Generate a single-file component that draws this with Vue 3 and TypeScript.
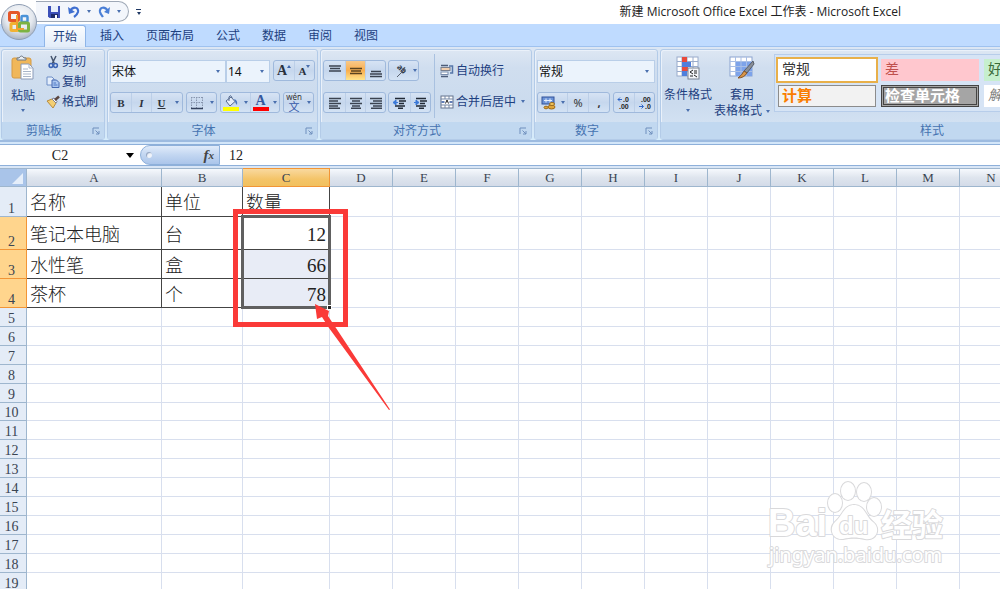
<script setup lang="ts">
import { ref } from 'vue'

interface Column { name: string; width: number }
interface Row { id: number; height: number; cells: string[] }

const tabs: string[] = ['开始', '插入', '页面布局', '公式', '数据', '审阅', '视图']
const activeTab = ref('开始')

const fontName = ref('宋体')
const fontSize = ref('14')
const numberFormat = ref('常规')
const cellRef = ref('C2')
const formula = ref('12')

const columns: Column[] = [
  { name: 'A', width: 135 },
  { name: 'B', width: 81 },
  { name: 'C', width: 87 },
  ...'DEFGHIJKLMN'.split('').map((name) => ({ name, width: 63 })),
]
const tableWidth = columns.reduce((sum, c) => sum + c.width, 27)

const data: string[][] = [
  ['名称', '单位', '数量'],
  ['笔记本电脑', '台', '12'],
  ['水性笔', '盒', '66'],
  ['茶杯', '个', '78'],
]
const dataHeights: number[] = [30, 33, 29, 29]

const rows: Row[] = Array.from({ length: 20 }, (_, i) => ({
  id: i + 1,
  height: dataHeights[i] ?? (i === 9 ? 18 : 19),
  cells: data[i] ?? [],
}))

function cellClass(row: Row, col: number): Record<string, boolean> {
  return {
    filled: row.id <= 4 && col < 3,
    number: col === 2 && row.id > 1,
    selected: col === 2 && row.id > 2 && row.id <= 4,
  }
}
</script>

<template>
  <div class="window">
    <header class="titlebar">
      <button class="office" aria-label="Office">
        <svg viewBox="0 0 38 38" width="38" height="38">
          <defs>
            <radialGradient id="orb" cx="50%" cy="35%" r="65%">
              <stop offset="0" stop-color="#ffffff" />
              <stop offset="0.6" stop-color="#e4e8ee" />
              <stop offset="1" stop-color="#a9b4c4" />
            </radialGradient>
          </defs>
          <circle cx="19" cy="19" r="17.5" fill="url(#orb)" stroke="#8e9db3" />
          <g fill="none" stroke-width="3">
            <rect x="9.500" y="9.500" width="9" height="8" rx="1" stroke="#e4572a" />
            <rect x="21.500" y="13" width="6" height="6" rx="1" stroke="#4b93d8" stroke-width="2.500" />
            <rect x="11" y="20.500" width="7" height="7" rx="1" stroke="#f2b233" />
            <rect x="19.500" y="20" width="9" height="8" rx="1" stroke="#7cb342" />
            <path d="M17 12V26H24" stroke="#f0a030" stroke-width="2" />
          </g>
        </svg>
      </button>
      <div class="quick">
        <button aria-label="保存">
          <svg viewBox="0 0 14 14" width="14" height="14">
            <path d="M1 1H13V13H2.500L1 11.500Z" fill="#3c50b8" />
            <rect x="4" y="1" width="7" height="6" fill="#e8f0fb" />
            <rect x="4" y="9" width="7" height="4" fill="#1d2c6b" />
            <rect x="8" y="10" width="2" height="3" fill="#fff" />
          </svg>
        </button>
        <button aria-label="撤消">
          <svg viewBox="0 0 14 14" width="14" height="14">
            <path d="M3 6C6 1 12 2 11 7C10.500 9 9 10.500 7 12" fill="none" stroke="#3f6fd0" stroke-width="2.200" />
            <path d="M1 2L2 9L8 7Z" fill="#3f6fd0" />
          </svg>
        </button>
        <i class="caret" />
        <button aria-label="恢复">
          <svg viewBox="0 0 14 14" width="14" height="14">
            <path d="M11 6C8 1 2 2 3 7C3.500 9 5 10.500 6 12" fill="none" stroke="#4a7fd6" stroke-width="2.200" />
            <path d="M13 2L12 9L7 7Z" fill="#4a7fd6" />
          </svg>
        </button>
        <i class="caret" />
      </div>
      <button class="more" aria-label="自定义快速访问工具栏"><i class="caret" /></button>
      <h1>新建 Microsoft Office Excel 工作表 - Microsoft Excel</h1>
    </header>

    <nav class="tabs">
      <button
        v-for="tab in tabs"
        :key="tab"
        :class="{ active: tab === activeTab }"
        @click="activeTab = tab"
      >{{ tab }}</button>
    </nav>

    <div class="ribbon">
      <section class="group clipboard">
        <div class="body">
          <button class="big paste">
            <svg viewBox="0 0 24 26" width="24" height="26">
              <rect x="1" y="3" width="19" height="20" rx="2" fill="#f0b75a" stroke="#d59a45" />
              <path d="M6 5V3H8Q10.500 -1 13 3H15V5Z" fill="#e9edf2" stroke="#6d7885" />
              <path d="M10 9H18L22 13V24H10Z" fill="#fff" stroke="#8a9ab8" />
              <path d="M18 9V13H22M12 14H17M12 16.500H20M12 19H20M12 21.500H20" fill="none" stroke="#a9b5c9" />
            </svg>
            <span>粘贴</span>
            <i class="caret" />
          </button>
          <div class="stack">
            <button class="line">
              <svg viewBox="0 0 14 14" width="14" height="14">
                <path d="M5 1L8.500 9M10 1L6 9" stroke="#44546e" stroke-width="1.500" />
                <circle cx="5" cy="10.500" r="1.900" fill="none" stroke="#3c64b4" stroke-width="1.500" />
                <circle cx="9.500" cy="10.500" r="1.900" fill="none" stroke="#3c64b4" stroke-width="1.500" />
              </svg>剪切
            </button>
            <button class="line">
              <svg viewBox="0 0 14 14" width="14" height="14">
                <path d="M1 2H6L8 4V10H1Z" fill="#e5eefb" stroke="#6f8fc8" />
                <path d="M6 5H10.500L13 7.500V12.500H6Z" fill="#a9c5f0" stroke="#4468b0" />
                <path d="M7.500 8H10M7.500 10H11.500" stroke="#4f78c4" />
              </svg>复制
            </button>
            <button class="line">
              <svg viewBox="0 0 14 14" width="14" height="14">
                <path d="M1 6L6 4L10 8L7 13Z" fill="#f3cf73" stroke="#b98b3c" />
                <path d="M6 4L8 3L11 6.500L10 8Z" fill="#fff" stroke="#7a7f94" />
                <path d="M9 5L13 1.500" stroke="#5b4640" stroke-width="2.500" />
              </svg>格式刷
            </button>
          </div>
        </div>
        <footer><span>剪贴板</span><button class="launch" aria-label="剪贴板选项"><svg viewBox="0 0 8 8" width="8" height="8"><path d="M1 7V1H7M3.500 3.500L7 7M7 4V7H4" fill="none" stroke="#6f8fbd" /></svg></button></footer>
      </section>

      <section class="group font">
        <div class="body rows">
          <div class="bar">
            <label class="combo grow"><select v-model="fontName" aria-label="字体"><option>宋体</option></select><i class="caret" /></label>
            <label class="combo size"><select v-model="fontSize" aria-label="字号"><option>14</option></select><i class="caret" /></label>
            <div class="set sizes">
              <button class="serif" aria-label="增大字号">A<i class="up" /></button>
              <button class="serif small" aria-label="减小字号">A<i class="caret" /></button>
            </div>
          </div>
          <div class="bar">
            <div class="set bold-set">
              <button class="serif">B</button>
              <button class="serif"><em>I</em></button>
              <button class="serif"><u>U</u></button>
              <button class="drop" aria-label="下划线"><i class="caret" /></button>
            </div>
            <div class="set">
              <button aria-label="边框">
                <svg viewBox="0 0 14 14" width="14" height="14">
                  <path d="M1.500 1V13M6.500 1V13M12.500 1V13M1 1.500H13M1 6.500H13" stroke="#8795ad" stroke-dasharray="1.500 1" />
                  <path d="M1 12.500H13" stroke="#34425e" stroke-width="1.500" />
                </svg>
              </button>
              <button class="drop" aria-label="边框选项"><i class="caret" /></button>
            </div>
            <div class="set colors">
              <button aria-label="填充颜色">
                <svg viewBox="0 0 16 16" width="16" height="16">
                  <path d="M3 6L8 2L12 6.500L7 11Z" fill="#e6edf7" stroke="#54698d" />
                  <path d="M6 6V2Q8 -1 9 3" fill="none" stroke="#54698d" />
                  <path d="M11 4Q15 5 14 10Q12 8 12 6Z" fill="#4b75bd" />
                  <rect y="12" width="16" height="4" fill="#ffff00" />
                </svg>
              </button>
              <button class="drop" aria-label="填充颜色选项"><i class="caret" /></button>
              <button class="color-a" aria-label="字体颜色"><b>A</b><span class="red" /></button>
              <button class="drop" aria-label="字体颜色选项"><i class="caret" /></button>
            </div>
            <div class="set">
              <button class="pinyin" aria-label="拼音"><small>wén</small><span>文</span></button>
              <button class="drop" aria-label="拼音选项"><i class="caret" /></button>
            </div>
          </div>
        </div>
        <footer><span>字体</span><button class="launch" aria-label="字体选项"><svg viewBox="0 0 8 8" width="8" height="8"><path d="M1 7V1H7M3.500 3.500L7 7M7 4V7H4" fill="none" stroke="#6f8fbd" /></svg></button></footer>
      </section>

      <section class="group align">
        <div class="body split">
          <div class="rows">
            <div class="bar">
              <div class="set">
                <button aria-label="顶端对齐"><svg viewBox="0 0 12 14" width="12" height="14"><path d="M0 2H12M1 4.500H11M0 7H12" stroke="#3b4350" stroke-width="1.500" /></svg></button>
                <button class="on" aria-label="垂直居中"><svg viewBox="0 0 12 14" width="12" height="14"><path d="M0 4.500H12M1 7H11M0 9.500H12" stroke="#5a4420" stroke-width="1.500" /></svg></button>
                <button aria-label="底端对齐"><svg viewBox="0 0 12 14" width="12" height="14"><path d="M1 7.500H11M0 10H12M0 12.500H12" stroke="#3b4350" stroke-width="1.500" /></svg></button>
              </div>
              <div class="set">
                <button class="orient" aria-label="方向">
                  <svg viewBox="0 0 16 16" width="16" height="16">
                    <g transform="rotate(45 8 8)"><text x="3" y="8" font-size="8" font-weight="bold" fill="#333b48">ab</text></g>
                    <path d="M5 14L13 6M13 6V9M13 6H10" stroke="#59616e" fill="none" />
                  </svg>
                </button>
                <button class="drop" aria-label="方向选项"><i class="caret" /></button>
              </div>
            </div>
            <div class="bar">
              <div class="set">
                <button aria-label="左对齐"><svg viewBox="0 0 12 12" width="12" height="12"><path d="M0 1.500H12M0 4H9M0 6.500H12M0 9H9M0 11.300H11" stroke="#3b4350" stroke-width="1.400" /></svg></button>
                <button aria-label="居中"><svg viewBox="0 0 12 12" width="12" height="12"><path d="M0 1.500H12M2 4H10M0 6.500H12M2 9H10M1 11.300H11" stroke="#3b4350" stroke-width="1.400" /></svg></button>
                <button aria-label="右对齐"><svg viewBox="0 0 12 12" width="12" height="12"><path d="M0 1.500H12M3 4H12M0 6.500H12M3 9H12M1 11.300H12" stroke="#3b4350" stroke-width="1.400" /></svg></button>
              </div>
              <div class="set">
                <button aria-label="减少缩进"><svg viewBox="0 0 13 12" width="13" height="12"><path d="M2 1.500H12M6 4H13M6 6.500H11M2 9H12M5 11.300H10" stroke="#222a36" stroke-width="1.500" /><path d="M0 5.500L3 3V8ZM2 5.500H5" fill="#3a78d8" stroke="#3a78d8" /></svg></button>
                <button aria-label="增加缩进"><svg viewBox="0 0 13 12" width="13" height="12"><path d="M2 1.500H12M6 4H13M6 6.500H11M2 9H12M5 11.300H10" stroke="#222a36" stroke-width="1.500" /><path d="M5 5.500L2 3V8ZM0 5.500H3" fill="#3a78d8" stroke="#3a78d8" /></svg></button>
              </div>
            </div>
          </div>
          <div class="rows wrap">
            <button class="line">
              <svg viewBox="0 0 14 14" width="14" height="14">
                <path d="M1 1.500H8M1 12.500H8" stroke="#4d5c78" stroke-width="1.500" />
                <rect x="1" y="3.500" width="9" height="3" fill="#f2cfae" stroke="#7c808c" />
                <rect x="1" y="8" width="7" height="2.500" fill="#fff" stroke="#7c8fae" />
                <path d="M9 2H12.500V9H10" fill="none" stroke="#5576a8" stroke-width="1.500" />
              </svg>自动换行
            </button>
            <button class="line">
              <svg viewBox="0 0 14 14" width="14" height="14">
                <rect x="1" y="1" width="12" height="12" fill="#fff" stroke="#65738c" />
                <path d="M1 4H13M1 10H13M5 1V4M9 1V4M5 10V13M9 10V13" stroke="#7587a5" />
                <path d="M1.500 7H4.500M9.500 7H12.500" stroke="#2f55a0" stroke-width="1.500" />
                <path d="M5.500 8.500L7 5L8.500 8.500" fill="none" stroke="#222" />
              </svg>合并后居中<i class="caret" />
            </button>
          </div>
        </div>
        <footer><span>对齐方式</span><button class="launch" aria-label="对齐方式选项"><svg viewBox="0 0 8 8" width="8" height="8"><path d="M1 7V1H7M3.500 3.500L7 7M7 4V7H4" fill="none" stroke="#6f8fbd" /></svg></button></footer>
      </section>

      <section class="group numbers">
        <div class="body rows">
          <div class="bar">
            <label class="combo grow"><select v-model="numberFormat" aria-label="数字格式"><option>常规</option></select><i class="caret" /></label>
          </div>
          <div class="bar">
            <div class="set money">
              <button aria-label="会计数字格式">
                <svg viewBox="0 0 15 14" width="15" height="14">
                  <rect x="1" y="1" width="12" height="7" fill="#6d94d8" stroke="#33539a" />
                  <path d="M3 4.500H11M5 2.500V6.500M9 2.500V6.500" stroke="#e6effc" />
                  <ellipse cx="10.500" cy="11" rx="3.500" ry="2" fill="#e0a53a" stroke="#9c6a1a" />
                  <ellipse cx="11" cy="8" rx="2.500" ry="1.500" fill="#f5cb62" stroke="#9c6a1a" />
                  <ellipse cx="5" cy="11.500" rx="2" ry="1.300" fill="#e0a53a" stroke="#9c6a1a" />
                </svg>
              </button>
              <button class="drop" aria-label="会计格式选项"><i class="caret" /></button>
              <button class="percent">%</button>
              <button class="comma">,</button>
            </div>
            <div class="set decimals">
              <button aria-label="增加小数位数"><svg viewBox="0 0 14 14" width="14" height="14"><text x="6" y="6" font-size="7">.0</text><text x="2" y="13" font-size="7">.00</text><path d="M1 3.500H5M3 1.500L1 3.500L3 5.500" fill="none" stroke="#2f66c8" /></svg></button>
              <button aria-label="减少小数位数"><svg viewBox="0 0 14 14" width="14" height="14"><text x="3" y="6" font-size="7">.00</text><text x="7" y="13" font-size="7">.0</text><path d="M1 10.500H5M3.500 8.500L5.500 10.500L3.500 12.500" fill="none" stroke="#2f66c8" /></svg></button>
            </div>
          </div>
        </div>
        <footer><span>数字</span><button class="launch" aria-label="数字选项"><svg viewBox="0 0 8 8" width="8" height="8"><path d="M1 7V1H7M3.500 3.500L7 7M7 4V7H4" fill="none" stroke="#6f8fbd" /></svg></button></footer>
      </section>

      <section class="group styles">
        <div class="body">
          <button class="big">
            <svg viewBox="0 0 24 24" width="24" height="24">
              <rect x="1" y="1" width="21" height="19" fill="#fff" stroke="#9aaccc" />
              <path d="M1 5.500H22M1 10.500H22M1 15.500H22M6 1V20M11 1V20M17 1V20" stroke="#9aaccc" />
              <rect x="6" y="1" width="5" height="5" fill="#e84a3c" />
              <rect x="6" y="6" width="9" height="5" fill="#4f7fdc" />
              <rect x="6" y="11" width="6" height="4" fill="#e84a3c" />
              <rect x="6" y="15" width="5" height="5" fill="#4f7fdc" />
              <rect x="12" y="12" width="11" height="11" fill="#f4f5f8" stroke="#7b8494" />
              <path d="M17 14L14 16L17 18M18 15H21M18 17H21M14 20H17M18 19L21 21" fill="none" stroke="#222" />
            </svg>
            <span>条件格式</span>
            <i class="caret" />
          </button>
          <button class="big table-style">
            <svg viewBox="0 0 26 24" width="26" height="24">
              <rect x="1" y="1" width="22" height="19" fill="#fff" stroke="#8ba3cf" />
              <rect x="7" y="6" width="16" height="14" fill="#7da3ea" />
              <path d="M1 5.500H23M1 10.500H23M1 15.500H23M6.500 1V20M12 1V20M17.500 1V20" stroke="#a9bfe6" />
              <path d="M24 5L25 8L18 17L15 15Z" fill="#8b9099" stroke="#575d68" />
              <path d="M15 15L18 17Q15 22 9 22Q13 19 15 15Z" fill="#d99547" stroke="#845528" />
            </svg>
            <span>套用</span>
            <span class="second">表格格式<i class="caret" /></span>
          </button>
          <div class="gallery">
            <button class="normal">常规</button>
            <button class="bad">差</button>
            <button class="good">好</button>
            <button class="calc">计算</button>
            <button class="check">检查单元格</button>
            <button class="explain">解释性文本</button>
          </div>
        </div>
        <footer><span>样式</span></footer>
      </section>
    </div>

    <div class="formula-bar">
      <input v-model="cellRef" class="name-box" aria-label="名称框" />
      <button class="name-drop" aria-label="名称列表"><i class="caret" /></button>
      <div class="fx-area">
        <i class="knob" />
        <button class="fx" aria-label="插入函数">f<sub>x</sub></button>
      </div>
      <input v-model="formula" class="formula" aria-label="编辑栏" />
    </div>

    <main class="sheet">
      <table :style="{ width: tableWidth + 'px' }">
        <colgroup>
          <col class="row-col" />
          <col v-for="c in columns" :key="c.name" :style="{ width: c.width + 'px' }" />
        </colgroup>
        <thead>
          <tr>
            <th class="corner"><i /></th>
            <th v-for="c in columns" :key="c.name" scope="col" :class="{ hot: c.name === 'C' }">{{ c.name }}</th>
          </tr>
        </thead>
        <tbody>
          <tr v-for="row in rows" :key="row.id" :style="{ height: row.height + 'px' }">
            <th scope="row" :class="{ hot: row.id > 1 && row.id < 5 }"><div>{{ row.id }}</div></th>
            <td v-for="(c, i) in columns" :key="c.name" :class="cellClass(row, i)">{{ row.cells[i] }}</td>
          </tr>
        </tbody>
      </table>

      <div class="selection"><i /></div>
      <div class="frame" />
      <svg class="arrow" viewBox="0 0 76 108" width="76" height="108">
        <path d="M0 0L14 7L13 12L21 24L75 105.500L74 106L14 24L7 13L2 15Z" fill="#fa3a38" />
      </svg>
      <svg class="watermark" viewBox="0 0 190 90" width="190" height="90">
        <g class="mark">
          <text x="4" y="54" font-size="38" font-weight="bold">Bai</text>
          <text x="117" y="54" font-size="31" font-weight="bold" class="cjk">经验</text>
          <path d="M90 23C80 23 79 33 72 39C64 46 68 58 79 57C87 55 93 55 101 57C113 59 117 46 109 40C101 34 101 23 90 23Z" />
          <ellipse cx="71" cy="21" rx="7" ry="9" />
          <ellipse cx="84" cy="9" rx="7" ry="9" />
          <ellipse cx="100" cy="10" rx="7" ry="9" />
          <ellipse cx="110" cy="25" rx="7" ry="9" />
          <text x="75" y="52" font-size="24" font-weight="bold">du</text>
          <text x="5" y="80" font-size="20" class="url">jingyan.baidu.com</text>
        </g>
      </svg>
    </main>
  </div>
</template>

<style>
body {
  margin: 0;
  overflow: hidden;
}
</style>

<style scoped>
.window {
  display: flex;
  flex-direction: column;
  height: 100vh;
  overflow: hidden;
  background: #fff;
  color: #1e3f7f;
  font: 12px/16px "Noto Sans", "Noto Sans CJK SC", sans-serif;
}
* { box-sizing: border-box; }
button {
  display: flex;
  align-items: center;
  justify-content: center;
  margin: 0;
  padding: 0;
  border: 0;
  background: none;
  color: inherit;
  font: inherit;
  white-space: nowrap;
}
svg { display: block; flex: none; }
.caret {
  flex: none;
  width: 0;
  height: 0;
  border: 2px solid transparent;
  border-top: 3px solid #4a6fae;
  border-bottom: 0;
}
.up {
  width: 0;
  height: 0;
  border: 2px solid transparent;
  border-bottom: 3px solid #3c62a8;
  border-top: 0;
}

/* title bar */
.titlebar {
  position: relative;
  z-index: 2;
  display: flex;
  flex: none;
  height: 24px;
  padding-left: 36px;
}
.office {
  position: absolute;
  left: 0;
  top: 3px;
}
.quick {
  display: flex;
  align-items: center;
  gap: 6px;
  width: 93px;
  height: 21px;
  margin-top: 1px;
  padding-left: 11px;
  border: 1px solid #9ea8b6;
  border-left: 0;
  border-radius: 0 11px 11px 0;
  background: #f3f6fb;
}
.more {
  flex-direction: column;
  gap: 2px;
  width: 19px;
}
.more::before {
  content: "";
  width: 5px;
  height: 1px;
  background: #1f3864;
}
.more .caret { border-top-color: #1f3864; }
h1 {
  flex: 1;
  margin: 0 99px 0 0;
  color: #222;
  font-family: "Open Sans", "Noto Sans CJK SC", sans-serif;
  font-size: 12px;
  font-weight: 400;
  line-height: 24px;
  text-align: right;
}

/* tabs */
.tabs {
  display: flex;
  flex: none;
  gap: 6px;
  height: 23px;
  padding: 1px 0 0 44px;
  border-bottom: 1px solid #9fc2ef;
  background: #bfdbff;
}
.tabs button {
  height: 22px;
  padding: 0 8px;
  color: #1d417f;
}
.tabs .active {
  border: 1px solid #8eb5e8;
  border-bottom: 0;
  border-radius: 3px 3px 0 0;
  background: linear-gradient(#fbfdff, #e3edf9);
}

/* ribbon */
.ribbon {
  display: flex;
  flex: none;
  gap: 2px;
  height: 95px;
  padding: 2px 0 0 1px;
  overflow: hidden;
  border-bottom: 2px solid #9dbbe0;
  background: linear-gradient(#dbe6f4, #d4e4f5 80%, #d6ecfb);
}
.group {
  display: flex;
  flex: none;
  flex-direction: column;
  border: 1px solid #b3cbe8;
  border-radius: 3px;
  background: linear-gradient(#dde7f3, #d0deef 20%, #cbdbee 60%, #d8e6f5);
  box-shadow: inset 1px 1px 0 #eaf1fa;
}
.body {
  display: flex;
  height: 72px;
}
.group footer {
  display: flex;
  align-items: center;
  height: 17px;
  padding-right: 4px;
  background: #c1d8f0;
  color: #4573b0;
}
.group footer span {
  flex: 1;
  padding-right: 6px;
  text-align: center;
}
.rows {
  display: flex;
  flex-direction: column;
  gap: 9px;
  padding: 10px 2px 0;
}
.bar {
  display: flex;
  align-items: flex-start;
  gap: 3px;
  min-height: 23px;
}
.clipboard { width: 104px; }
.font { width: 211px; }
.align { width: 212px; }
.numbers { width: 124px; }
.group.styles { flex: 1 0 554px; }
.big {
  flex-direction: column;
  justify-content: flex-start;
  padding-top: 5px;
}
.big span {
  display: flex;
  align-items: center;
  height: 16px;
}
.paste {
  width: 42px;
}
.paste span { margin: 7px 0 5px; }
.stack {
  display: flex;
  flex-direction: column;
  gap: 3px;
  padding: 3px 0 0 2px;
}
.line {
  justify-content: flex-start;
  gap: 2px;
  height: 17px;
}
.line .caret { margin-left: 3px; }
.combo {
  position: relative;
  display: flex;
  align-items: center;
  height: 23px;
  padding-right: 5px;
  border: 1px solid #b9cee8;
  background: #ebf3fc;
}
.combo select {
  flex: 1;
  min-width: 0;
  height: 21px;
  padding: 0 1px;
  border: 0;
  background: none;
  appearance: none;
  color: #111;
  font: inherit;
}
.grow { flex: 1; }
.size {
  width: 44px;
  margin-left: -3px;
}
.set {
  display: flex;
  height: 21px;
  border: 1px solid #9fb9dc;
  border-radius: 3px;
  background: linear-gradient(#d6e3f4, #c6d7ed 50%, #d3e2f4);
}
.set button {
  min-width: 20px;
  height: 19px;
}
.set button + button { border-left: 1px solid #bccfe8; }
.set .drop {
  min-width: 9px;
  border-left-color: transparent;
}
.bold-set .drop { min-width: 11px; }
.sizes i { align-self: flex-start; margin-top: 4px; }
.serif {
  color: #2b313c;
  font-family: "Liberation Serif", serif;
  font-weight: 700;
}
.sizes .serif { font-size: 14px; }
.sizes .small { font-size: 11px; }
.bold-set .serif { font-size: 11px; }
.color-a {
  flex-direction: column;
  color: #34589e;
  font: 14px/12px "Liberation Serif", serif;
}
.red {
  width: 16px;
  height: 4px;
  background: #f00;
}
.pinyin {
  flex-direction: column;
  width: 20px;
  color: #3658a8;
  font-size: 11px;
  line-height: 11px;
}
.pinyin small {
  color: #333;
  font-size: 8px;
  line-height: 8px;
}
.on {
  background: linear-gradient(#f8c98a, #f9ae4e 50%, #ffe58c);
}
.split .wrap {
  margin: 4px 0 4px 1px;
  padding: 8px 0 0 5px;
  gap: 14px;
  border-left: 1px solid #a9c1e0;
}
.align .set button { min-width: 21px; }
.align .set button + button { min-width: 20px; }
.align .set .drop { min-width: 8px; width: 8px; }
.align .bar { gap: 2px; }
.numbers .bar { justify-content: space-between; }
.money { width: 74px; }
.money button { flex: 1; }
.money .drop { flex: none; }
.percent, .comma {
  color: #333;
  font-size: 11px;
}
.comma { font-weight: 700; }
.decimals text {
  fill: #222;
  font-family: "Liberation Sans", sans-serif;
  font-weight: 700;
}

/* styles group */
.styles .big {
  width: 54px;
  flex: none;
  padding-top: 6px;
}
.styles .big span { margin-top: 7px; }
.styles .big span + .caret { margin-top: 6px; }
.styles .big .second { margin-top: 0; }
.table-style .second .caret { margin-left: 4px; }
.gallery {
  display: grid;
  flex: none;
  grid-template-columns: 98px 98px 98px;
  grid-template-rows: 22px 22px;
  gap: 4px 5px;
  width: 330px;
  height: 58px;
  margin: 4px 0 0 5px;
  padding: 4px 3px;
  border: 1px solid #b7cdea;
  background: #d6e4f5;
}
.gallery button {
  justify-content: flex-start;
  padding-left: 4px;
  font-size: 14px;
  font-family: "Liberation Serif", "Noto Sans CJK SC", serif;
}
.gallery .normal {
  background: #fff;
  box-shadow: 0 0 0 2px #e8b04a;
  color: #333;
}
.gallery .bad { background: #ffc7ce; color: #c0504d; }
.gallery .good { background: #c6efce; color: #3a6b3a; }
.gallery .calc {
  border: 1px solid #8c8c8c;
  padding-left: 3px;
  background: #f2f2f2;
  color: #fa7d00;
  font-size: 15px;
  font-weight: 700;
}
.gallery .check {
  border: 3px double #444;
  padding-left: 1px;
  background: #a5a5a5;
  color: #fff;
  font-size: 15px;
  font-weight: 700;
}
.gallery .explain {
  background: #fff;
  color: #7f7f7f;
  font-style: italic;
}

/* formula bar */
.formula-bar {
  display: flex;
  flex: none;
  height: 26px;
  padding-top: 2px;
  border-bottom: 2px solid #d9e6f6;
  background: #fff;
  box-shadow: inset 0 2px 0 #d3e6f9, inset 0 3px 0 #8eb0da, inset 0 -1px 0 #8eb0da;
}
.formula-bar input {
  height: 22px;
  border: 0;
  outline: 0;
  padding: 1px 0 0;
  background: none;
  color: #222;
  font: 14px "Liberation Serif", serif;
}
.formula-bar .name-box {
  width: 120px;
  text-align: center;
}
.name-drop {
  width: 20px;
}
.name-drop .caret {
  border-width: 5px 4px 0;
  border-top-color: #000;
}
.fx-area {
  display: flex;
  align-items: center;
  justify-content: space-between;
  width: 80px;
  margin: 1px 0;
  padding: 0 5px;
  border: 1px solid #8eb0da;
  border-radius: 11px 0 0 11px;
  background: linear-gradient(#e0ebfa, #c2d6f1 50%, #abc5ea);
}
.knob {
  width: 6px;
  height: 6px;
  border-radius: 50%;
  background: #f0f4fa;
  box-shadow: inset 1px 1px 1px #8fa3c2;
}
.fx {
  color: #444;
  font: italic bold 15px "Liberation Serif", serif;
}
.fx sub { font-size: 11px; }
.formula-bar .formula {
  flex: 1;
  padding-left: 9px;
}

/* sheet */
.sheet {
  position: relative;
  flex: 1;
  min-height: 0;
  overflow: hidden;
}
table {
  table-layout: fixed;
  border-spacing: 0;
  border-collapse: separate;
  color: #222;
}
.row-col { width: 27px; }
th {
  padding: 0;
  border-right: 1px solid #9eb6ce;
  border-bottom: 1px solid #9eb6ce;
  background: #e4ecf7;
  color: #3a4452;
  font: 14px/15px "Liberation Serif", serif;
}
thead th {
  height: 19px;
  border-top: 1px solid #9eb6ce;
  background: linear-gradient(#f6f9fd, #dfe5ee 50%, #d3dbe8);
  font-size: 13px;
  line-height: 17px;
}
thead .corner { background: #a9c4e9; }
.corner i {
  display: block;
  width: 0;
  height: 0;
  margin: 2px 0 0 12px;
  border-left: 11px solid transparent;
  border-bottom: 11px solid #e5eefa;
}
tbody th { vertical-align: bottom; }
tbody th div { padding-right: 3px; }
thead .hot {
  border-color: #f29536;
  background: linear-gradient(#f9d99f, #f4c468 60%, #f1c15f);
}
tbody .hot {
  border-color: #f29536;
  background: #ffd58d;
}
td {
  overflow: hidden;
  padding: 0 3px;
  border-right: 1px solid #d8dfee;
  border-bottom: 1px solid #d8dfee;
  font: 300 18px/18px "Liberation Serif", "Noto Sans CJK SC", serif;
  white-space: nowrap;
}
.filled {
  padding-top: 3px;
  border-color: #444;
}
.number {
  font-size: 19px;
  text-align: right;
}
.selected { background: #e8ecf6; }
.selection {
  position: absolute;
  left: 241px;
  top: 47px;
  width: 90px;
  height: 94px;
  border: 3px solid #606060;
}
.selection i {
  position: absolute;
  right: -4px;
  bottom: -4px;
  width: 5px;
  height: 5px;
  border: 1px solid #fff;
  background: #222;
}
.frame {
  position: absolute;
  left: 233px;
  top: 41px;
  width: 115px;
  height: 118px;
  border: 5px solid #fa3a38;
}
.arrow {
  position: absolute;
  left: 315px;
  top: 136px;
}
.watermark {
  position: absolute;
  left: 764px;
  top: 314px;
  overflow: visible;
}
.mark {
  fill: #fff;
  stroke: #d9d9db;
  stroke-width: 2px;
  paint-order: stroke;
  stroke-linejoin: round;
  font-family: "Liberation Sans", sans-serif;
}
.mark .cjk { font-family: "Noto Sans CJK SC", sans-serif; }
.mark .url { font-family: "Noto Sans", sans-serif; }
</style>
